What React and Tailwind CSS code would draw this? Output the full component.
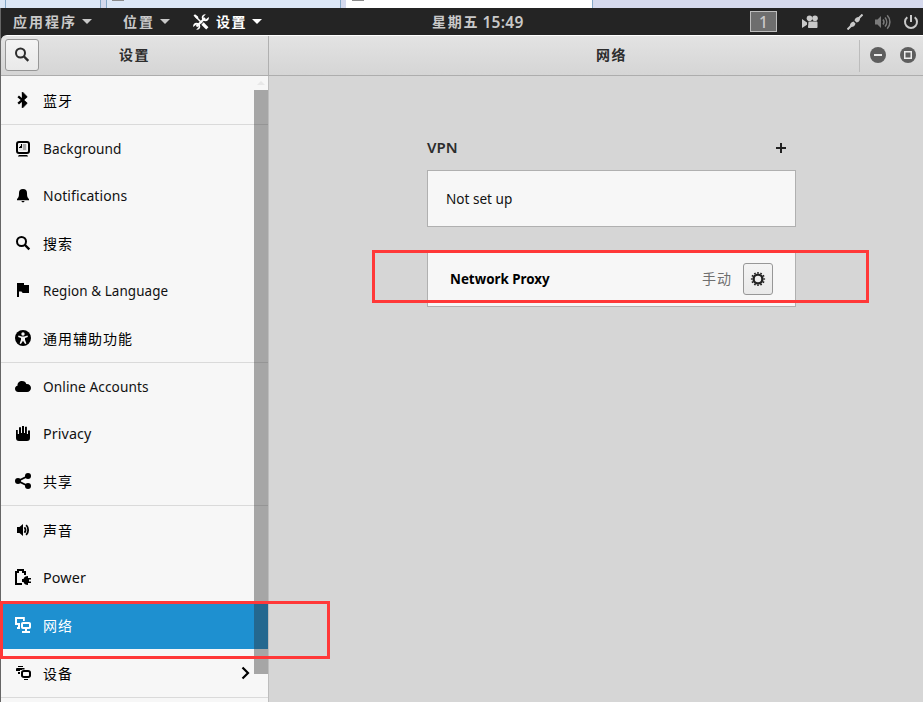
import React from "react";

const Svg = ({ children, className = "" }) => (
  <svg viewBox="0 0 16 16" width="16" height="16" fill="currentColor" className={"shrink-0 " + className}>
    {children}
  </svg>
);

const SearchIcon = () => (
  <Svg>
    <circle cx="6.5" cy="6" r="4.5" fill="none" stroke="currentColor" strokeWidth="2" />
    <path d="M9.5 9 14.3 13.8" fill="none" stroke="currentColor" strokeWidth="2.4" />
  </Svg>
);

const icons = {
  bluetooth: (
    <Svg>
      <path d="M3.2 4.300 10.800 11 8 13.700V2.300L10.800 5 3.200 11.700" fill="none" stroke="currentColor" strokeWidth="2.300" />
      <path d="M6.900 0h1.600l4 4.600-3.200 3.400 3.200 3.500-4 4.500H6.900v-2.500h2V2.500h-2z" fillOpacity="0.5" />
    </Svg>
  ),
  background: (
    <Svg>
      <rect x="2" y="1" width="12" height="11" rx="2" fill="none" stroke="currentColor" strokeWidth="2" />
      <path d="M4 3h8v7H4z" fill="#e5e5e5" />
      <path d="M8 3h3v6H8z" fill="#aaa" />
      <path d="M6 3h1v4H4V6h1V5h1z" />
      <path d="M5 14h6c1.200 0 2 .5 2 1.500H3c0-1 .8-1.500 2-1.500z" />
    </Svg>
  ),
  bell: (
    <Svg>
      <path d="M8 1C5.300 1 4 2.600 4 5c0 3.500-.4 4.700-2 6v1.300h12V11c-1.600-1.300-2-2.500-2-6 0-2.400-1.300-4-4-4zM6.500 13h3c0 .9-.7 1.300-1.500 1.300S6.500 13.900 6.500 13z" />
    </Svg>
  ),
  search: (
    <Svg>
      <circle cx="6.500" cy="6.500" r="4.500" fill="none" stroke="currentColor" strokeWidth="2" />
      <path d="M9.500 9.500 14.300 14.300" fill="none" stroke="currentColor" strokeWidth="2.400" />
    </Svg>
  ),
  flag: (
    <Svg>
      <path d="M2 0h7v2h5v8H8.500c-.6 0-1.500-.5-2-1.500H4V14H2z" />
    </Svg>
  ),
  access: (
    <Svg>
      <circle cx="8" cy="8" r="8" />
      <circle cx="8" cy="4" r="1.700" fill="#f7f7f7" />
      <path d="M3.500 5.600 6.800 6.500h2.400l3.300-.9.4 1.300L10 8v1.700l1.400 3.700-1.300.6L8 10.800 5.900 14l-1.300-.6L6 9.700V8L3.100 6.900z" fill="#f7f7f7" />
    </Svg>
  ),
  cloud: (
    <Svg>
      <path d="M3.300 14C1.300 14 0 12.600 0 10.800c0-1.700 1.100-2.800 2.500-3C2.300 5 4.400 3 7 3c2.300 0 3.900 1.300 4.300 3 2.700-.3 4.700 1.500 4.700 4 0 2.300-1.700 4-3.900 4z" />
    </Svg>
  ),
  hand: (
    <Svg>
      <path d="M1 4h1.800v4H4V1.300h2V7h1V0h2v7h1V.8h1.900V8H13V4.500h2V12c0 2-1 3-3 3H4c-2 0-3-1-3-3z" />
    </Svg>
  ),
  share: (
    <Svg>
      <circle cx="13" cy="3" r="3" />
      <circle cx="3" cy="8" r="3" />
      <circle cx="13" cy="13" r="3" />
      <path d="M13 3 3 8l10 5" fill="none" stroke="currentColor" strokeWidth="1.900" />
    </Svg>
  ),
  sound: (
    <Svg>
      <path d="M2 5h2.500L8 2v12l-3.500-3H2z" />
      <path d="M9.500 5.300c1.200 1.500 1.200 3.900 0 5.400M11.200 3c2.600 2.700 2.600 7.300 0 10" fill="none" stroke="currentColor" strokeWidth="1.800" />
    </Svg>
  ),
  power: (
    <Svg>
      <path d="M7 15H1V3h2V1h5v2h2v3" fill="none" stroke="currentColor" strokeWidth="2" />
      <path d="M7 10h1.500c.5-2 2-3 4.500-3v2h3v1.500h-2v2h2V14h-3v2c-2.500 0-4-1-4.500-3H7z" />
    </Svg>
  ),
  network: (
    <Svg>
      <path d="M0 0h9.800v4H8V2H2v4h3v2H0zM2 10h3v2H2z" />
      <path d="M3 8h2v2H3z" />
      <path d="M8 5h6c1.300 0 2 .7 2 2v3c0 1.300-.7 2-2 2h-2v2h3v2H7v-2h3v-2H8c-1.300 0-2-.7-2-2V7c0-1.300.7-2 2-2zm0 2v3h6V7z" fillRule="evenodd" />
    </Svg>
  ),
  devices: (
    <Svg>
      <path d="M3 1h5v1H3zM2 3h7.500v1.500H7V5H5v1H1V4.500C1 3.600 1.300 3 2 3zM3 7h2v2H3z" />
      <path d="M9 5h4c2 0 3 1 3 2.500v3c0 1.300-1 2.500-2.500 2.500H9c-2 0-3-1-3-2.500v-3C6 6 7 5 9 5zm0 2c-.7 0-1 .3-1 1v2c0 .7.300 1 1 1h4c.7 0 1-.3 1-1V8c0-.7-.3-1-1-1z" fillRule="evenodd" />
      <path d="M9 14h4v1H9z" />
    </Svg>
  ),
};

const latin = "ml-3 origin-left text-[15px] leading-4 tracking-[0.1px] text-[#111] ";
const cjk = "ml-3 mt-px text-[14px] leading-4 tracking-[1px]";

const rows = [
  ["bluetooth", "蓝牙", "h-[49px] pt-4 border-b", cjk],
  ["background", "Background", "h-[47px] pt-4", latin + "-mt-px scale-x-[0.91]"],
  ["bell", "Notifications", "h-12 pt-4", latin + "-mt-px scale-x-[0.93]"],
  ["search", "搜索", "h-[47px] pt-[15px]", cjk],
  ["flag", "Region & Language", "h-12 pt-4", latin + "-mt-px scale-x-[0.895]"],
  ["access", "通用辅助功能", "h-12 pt-[15px] border-b", cjk],
  ["cloud", "Online Accounts", "h-[47px] pt-[15px]", latin + "scale-x-[0.91]"],
  ["hand", "Privacy", "h-12 pt-4", latin + "-mt-px scale-x-[0.955]"],
  ["share", "共享", "h-12 pt-[15px] border-b", cjk],
  ["sound", "声音", "h-12 pt-4", cjk],
  ["power", "Power", "h-12 pt-[15px]", latin + "scale-x-[0.96]"],
  ["network", "网络", "h-[47px] pt-[15px] bg-[#1e90d0] text-white", cjk],
  ["devices", "设备", "h-[49px] pt-4 border-b", cjk],
];

const Caret = () => (
  <svg width="10" height="5" viewBox="0 0 10 5" fill="currentColor" className="shrink-0">
    <path d="M0 0h10L5 5z" />
  </svg>
);

function TabStrip() {
  return (
    <div className="flex h-2 bg-[#d5d9ed]">
      <div className="w-[5px] bg-[#dce7f6]" />
      <div className="w-24 border-x border-[#86a9c8] bg-[#dce7f6]" />
      <div className="w-[5px]" />
      <div className="flex w-[235px] items-start border-x border-[#86a9c8] bg-[#dce7f6] pl-[5px]">
        <div className="h-px w-3 bg-[#8b8b8b]" />
      </div>
      <div className="w-[5px]" />
      <div className="flex w-[247px] items-start border-r border-[#86a9c8] bg-white pl-1.5">
        <div className="h-px w-3 bg-[#8b8b8b]" />
      </div>
    </div>
  );
}

function TopBar() {
  return (
    <div className="flex h-[27px] items-center bg-[#242424] text-[14px] font-bold leading-[26px] text-[#c9c9c9]">
      <div className="flex w-[110px] items-center gap-[5px] pl-3">
        <span className="tracking-[2px]">应用程序</span>
        <Caret />
      </div>
      <div className="flex w-[82px] items-center gap-[5px] pl-3">
        <span className="tracking-[2px]">位置</span>
        <Caret />
      </div>
      <div className="flex w-[239px] items-center text-white">
        <Svg>
          <path d="M2 2 9 9" stroke="currentColor" strokeWidth="1.600" />
          <path d="m9.500 9.500 4.800 4.800" stroke="currentColor" strokeWidth="3.200" />
          <path d="M3.500 12.500 12 4" stroke="currentColor" strokeWidth="2.200" />
          <path d="M12.800.2 10.500 2.700l.3 2.300 2.200.3L15.700 3c.7 2.300-.9 4.300-3 4.300-2.200 0-4-1.700-4-3.800C8.700 1.300 10.700-.2 12.800.2zM3.200 15.800l2.300-2.500-.3-2.200L3 10.800.3 13c-.6-2.300.9-4.200 3-4.200 2.200 0 4 1.700 4 3.700 0 2.200-2 3.700-4.100 3.300z" />
          <path d="M.5 1.500 2 .3l3 2.200.3 1.500L4 5z" />
        </Svg>
        <span className="ml-[7px] mr-[5px] tracking-[1.500px]">设置</span>
        <Caret />
      </div>
      <div className="flex w-[318px] items-center whitespace-nowrap">
        <span className="tracking-[1.800px]">星期五</span>
        <span className="ml-[3px] text-[15.500px] font-semibold tracking-[0.300px]">15:49</span>
      </div>
      <div className="flex h-[21px] w-[27px] items-center justify-center border border-[#bdbdbd] bg-[#6e6e6e] text-[15.500px] font-medium">1</div>
      <Svg className="ml-[25px]">
        <circle cx="7.500" cy="4.300" r="2.800" />
        <circle cx="13" cy="4.300" r="2.800" />
        <path d="M6.500 7.500h8c.6 0 1 .4 1 1V13c0 .6-.4 1-1 1H7c-.6 0-1-.4-1-1zM0 5l5 3.500v2.300L0 14z" />
      </Svg>
      <Svg className="ml-[29px]">
        <path d="M.5 15.500 4 12M12 4 15.500.5" stroke="currentColor" strokeWidth="2" />
        <path d="M3 13c-.5-2.800.8-5 3.500-5.500l2 2c-.5 2.700-2.700 4-5.500 3.500zM7.500 6.500l2 2c2.700-.4 4-2.600 3.500-5.500-2.900-.5-5.100.8-5.500 3.500z" />
      </Svg>
      <Svg className="ml-3 text-[#7b7b7b]">
        <path d="M0 5.500h2.500L6 2v12l-3.500-3.500H0z" />
        <path d="M8 5.500c1.200 1.500 1.200 3.500 0 5M10 3.500c2.300 2.600 2.300 6.400 0 9M12.200 1.300c3.600 3.800 3.600 9.600 0 13.400" fill="none" stroke="currentColor" strokeWidth="1.500" />
      </Svg>
      <Svg className="ml-3">
        <path d="M4.300 3.200a6 6 0 1 0 7.400 0M8 1v7" fill="none" stroke="currentColor" strokeWidth="2" />
      </Svg>
    </div>
  );
}

function HeaderBar() {
  return (
    <div className="flex h-[41px] rounded-tl-md border-b border-t border-b-[#adadad] border-t-white bg-gradient-to-b from-[#e3e3e3] to-[#d5d5d5] text-[14px] font-bold text-[#2d2d2d]">
      <div className="flex w-[268px] border-r border-[#b0b0b0] pl-1 pt-[3px]">
        <div className="flex h-8 w-[34px] items-center justify-center rounded-[3px] border border-[#979797] bg-gradient-to-b from-[#f4f4f4] to-[#e9e9e9]">
          <SearchIcon />
        </div>
        <div className="ml-[80px] pt-[6px] leading-5 tracking-[1.500px]">设置</div>
      </div>
      <div className="flex flex-1">
        <div className="ml-[327px] w-[263px] pt-[9px] leading-5 tracking-[1.500px]">网络</div>
        <div className="mt-1 h-8 w-px bg-[#bcbcbc]" />
        <svg width="16" height="16" viewBox="0 0 16 16" className="ml-[10px] mt-[11px]">
          <circle cx="8" cy="8" r="8" fill="#5e5e5e" />
          <path d="M4 7h8v2H4z" fill="#ededed" />
        </svg>
        <svg width="16" height="16" viewBox="0 0 16 16" className="ml-[14px] mt-[11px] shrink-0">
          <circle cx="8" cy="8" r="8" fill="#5e5e5e" />
          <path d="M4.750 4.750h6.500v6.500h-6.500z" fill="none" stroke="#ededed" strokeWidth="1.500" />
        </svg>
      </div>
    </div>
  );
}

function Sidebar() {
  return (
    <div className="relative w-[268px] shrink-0 border-r border-[#bdbdbd] bg-[#f7f7f7] text-black">
      {rows.map(([icon, label, cls, text]) => (
        <div key={icon} className={"flex items-start border-[#dadada] pl-3.5 pr-[18px] " + cls}>
          {icons[icon]}
          <span className={text}>{label}</span>
          {icon === "devices" && (
            <svg width="9" height="14" viewBox="0 0 9 14" className="ml-auto mt-px">
              <path d="m1.500 1.500 5.500 5.500-5.500 5.500" fill="none" stroke="black" strokeWidth="2.200" />
            </svg>
          )}
        </div>
      ))}
      <div className="absolute right-0 top-[14px] h-[584px] w-[14px] bg-[#2d2d2d]/40" />
      <svg className="absolute right-[3px] top-[5px]" width="8" height="4" viewBox="0 0 8 4">
        <path d="M0 4h8L4 0z" fill="#e8e8e8" />
      </svg>
    </div>
  );
}

function Content() {
  return (
    <div className="flex-1 bg-[#d6d6d6] pl-[158px] pt-[61px]">
      <div className="flex h-[33px] w-[369px] items-start justify-between text-[#2d2d2d]">
        <span className="text-[15px] font-semibold leading-5">VPN</span>
        <svg width="10" height="10" viewBox="0 0 10 10" className="mr-[10px] mt-[6px]">
          <path d="M4 0h2v4h4v2H6v4H4V6H0V4h4z" fill="#222" />
        </svg>
      </div>
      <div className="flex h-[57px] w-[369px] items-center border border-[#b0b0b0] bg-[#f7f7f7] pl-[18px] text-[#111]">
        <span className="origin-left scale-x-[0.905] text-[15px]">Not set up</span>
      </div>
      <div className="mt-[25px] flex h-[55px] w-[369px] items-center border border-[#b0b0b0] bg-[#f7f7f7] pb-[2px] pl-[22px] pr-[22px]">
        <span className="origin-left scale-x-[0.892] text-[15px] font-bold text-black">Network Proxy</span>
        <span className="ml-auto mr-[11px] text-[14px] tracking-[1px] text-[#6f6f6f]">手动</span>
        <div className="flex h-8 w-[30px] items-center justify-center rounded-[3px] border border-[#979797] bg-gradient-to-b from-[#f4f4f4] to-[#e9e9e9] text-[#222]">
          <Svg>
            <circle cx="8" cy="8" r="4.400" fill="none" stroke="currentColor" strokeWidth="2.400" />
            <circle cx="8" cy="8" r="6.200" fill="none" stroke="currentColor" strokeWidth="1.800" pathLength="120" strokeDasharray="4.800 5.200" strokeDashoffset="2.400" />
          </Svg>
        </div>
      </div>
    </div>
  );
}

export default function App() {
  return (
    <div className="relative flex h-[702px] w-[923px] flex-col overflow-hidden font-['Noto_Sans','Noto_Sans_CJK_SC',sans-serif]">
      <TabStrip />
      <div className="flex flex-1 flex-col border-l border-[#666] bg-[#242424]">
        <TopBar />
        <HeaderBar />
        <div className="flex flex-1 overflow-hidden">
          <Sidebar />
          <Content />
        </div>
      </div>
      <div className="absolute left-0 top-[601px] h-[58px] w-[330px] border-[3px] border-[#ff3838]" />
      <div className="absolute left-[372px] top-[250px] h-[53px] w-[497px] border-[3px] border-[#ff3838]" />
    </div>
  );
}
